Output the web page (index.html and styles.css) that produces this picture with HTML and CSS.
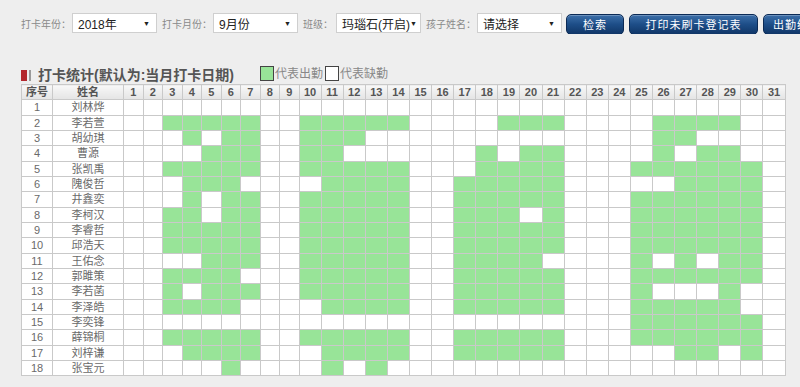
FILE: index.html
```html
<!DOCTYPE html>
<html>
  <head>
    <meta charset="UTF-8">
    <title>打卡统计</title>
    <link rel="stylesheet" href="styles.css">
  </head>

  <body>
    <div class="toolbar">
      <label>打卡年份：</label>
      <div class="select"><span>2018年</span><i>▼</i></div>
      <label>打卡月份：</label>
      <div class="select"><span>9月份</span><i>▼</i></div>
      <label class="lbl-class">班级：</label>
      <div class="select"><span>玛瑙石(开启)</span><i>▼</i></div>
      <label>孩子姓名：</label>
      <div class="select last"><span>请选择</span><i>▼</i></div>
      <button class="btn btn-search">检索</button>
      <button class="btn btn-print">打印未刷卡登记表</button>
      <button class="btn btn-stat">出勤统计表</button>
    </div>

    <div class="title-row">
      <h3 class="title"><span class="mark"></span><span class="mark-thin"></span>打卡统计(默认为:当月打卡日期)</h3>
      <div class="legend">
        <span class="box on"></span>代表出勤<span class="box"></span>代表缺勤
      </div>
    </div>

    <table class="grid">
      <colgroup id="cols"></colgroup>
      <thead><tr id="head"></tr></thead>
      <tbody id="rows"></tbody>
    </table>

    <script>

      // attendance per child: day ranges that were present

      const kids = [
        ["刘林烨", ""],
        ["李若萱", "3-7,10-14,19-21,26-29"],
        ["胡幼琪", "4,6-7,10-12,26-27"],
        ["曹源", "5-7,10-11,18,20-21,26,28-29"],
        ["张凯禹", "3-7,10-14,18-21,25-30"],
        ["隗俊哲", "4-6,11-14,17-21,27-30"],
        ["井鑫奕", "4,6-7,10-14,17-21,25-30"],
        ["李柯汉", "3-4,6-7,10-14,17-19,21,25-30"],
        ["李睿哲", "3-7,10-14,17-21,25-30"],
        ["邱浩天", "3-7,10-14,17-21,25-30"],
        ["王佑念", "5-7,10-14,17-20,25,27,29-30"],
        ["郭雎策", "3-6,10-14,17-21,25-30"],
        ["李若菡", "3,5-7,10-14,17-21,25,29"],
        ["李泽皓", "3-6,11-14,17-21,25-29"],
        ["李奕锋", "25-30"],
        ["薛锦桐", "3-7,10-14,17-21,25-30"],
        ["刘梓谦", "4-7,11-14,17-21,27-28,30"],
        ["张宝元", "6,11,13"]
      ];

      const days = 31;

      const parseDays = (txt) => {
        const on = {};
        if (!txt) return on;
        txt.split(",").forEach((part) => {
          const ends = part.split("-").map(Number);
          const last = ends.length > 1 ? ends[1] : ends[0];
          for (let d = ends[0]; d <= last; d++) on[d] = true;
        });
        return on;
      };

      let cols = '<col class="w-no"><col class="w-name">';
      let head = '<th>序号</th><th>姓名</th>';
      for (let d = 1; d <= days; d++) {
        cols += d < 10 ? '<col class="w-s">' : '<col class="w-d">';
        head += "<th>" + d + "</th>";
      }
      document.getElementById("cols").innerHTML = cols;
      document.getElementById("head").innerHTML = head;

      let rows = "";
      kids.forEach((kid, i) => {
        const on = parseDays(kid[1]);
        rows += '<tr><td class="no">' + (i + 1) + '</td><td class="name">' + kid[0] + "</td>";
        for (let d = 1; d <= days; d++) {
          rows += on[d] ? '<td class="on"></td>' : "<td></td>";
        }
        rows += "</tr>";
      });
      document.getElementById("rows").innerHTML = rows;

    </script>
  </body>
</html>
```

FILE: styles.css
```css
body {
  margin: 0;
  background-color: #eeeeee;
  font-family: "Liberation Sans", "Noto Sans CJK SC", sans-serif;
  overflow: hidden;
}

.toolbar {
  display: flex;
  align-items: center;
  height: 22px;
  margin-top: 12px;
  padding-left: 21px;
  white-space: nowrap;
  overflow: hidden;
}

.toolbar > * {
  flex-shrink: 0;
}

.toolbar label {
  font-size: 10px;
  color: #8a8a8a;
  margin-right: 1px;
}

.toolbar .lbl-class {
  margin-right: 3px;
}

.select {
  display: flex;
  align-items: center;
  justify-content: space-between;
  box-sizing: border-box;
  width: 85px;
  height: 20px;
  padding: 0 6px 0 5px;
  margin-right: 5px;
  border: 1px solid #cfcfcf;
  background-color: white;
  font-size: 12px;
  color: #222;
}

.select.last {
  margin-right: 4px;
}

.select i {
  font-style: normal;
  font-size: 7px;
}

.btn {
  box-sizing: border-box;
  height: 21px;
  margin: 2px 5px 0 0;
  padding: 0;
  border: 1px solid #0b2a55;
  border-radius: 5px;
  background: linear-gradient(#3c6fa9, #1d4d87 50%, #103667);
  box-shadow: inset 0 1px 0 rgba(255,255,255,.25);
  color: white;
  font-family: inherit;
  font-size: 11px;
  letter-spacing: 1px;
}

.btn-search { width: 58px; }
.btn-print { width: 129px; }
.btn-stat { width: 80px; }

.title-row {
  display: flex;
  align-items: flex-end;
  height: 21px;
  margin-top: 29px;
  padding-left: 21px;
}

.title {
  display: flex;
  align-items: center;
  margin: 0;
  font-size: 14px;
  line-height: 18px;
  color: #555;
}

.mark {
  width: 6px;
  height: 11px;
  background-color: #b3282d;
}

.mark-thin {
  width: 2px;
  height: 11px;
  margin: 0 7px 0 2px;
  background-color: #9a9a9a;
}

.legend {
  display: flex;
  align-items: flex-end;
  margin-left: 26px;
  margin-bottom: 3px;
  font-size: 12px;
  line-height: 13px;
  color: #888;
}

.box {
  box-sizing: border-box;
  width: 14px;
  height: 15px;
  margin-right: 1px;
  border: 1px solid #444;
  background-color: white;
}

.box.on {
  background-color: #98e498;
}

.legend .box:last-child {
  margin-left: 2px;
}

.grid {
  table-layout: fixed;
  width: 764px;
  margin-left: 21px;
  border-collapse: collapse;
  background-color: white;
}

.w-no { width: 31px; }
.w-name { width: 71px; }
.w-s { width: 19.5px; }
.w-d { width: 22.1px; }

.grid tr {
  height: 15.33px;
}

.grid th,
.grid td {
  height: 14px;
  padding: 0;
  border: 1px solid #c9c9c9;
  text-align: center;
  font-size: 11px;
  line-height: 12px;
}

.grid th {
  background: linear-gradient(#f8f8f8, #e4e4e4);
  color: #555;
  font-weight: bold;
}

.grid td {
  color: #6a6a6a;
}

.grid td.on {
  background-color: #98e498;
}
```
